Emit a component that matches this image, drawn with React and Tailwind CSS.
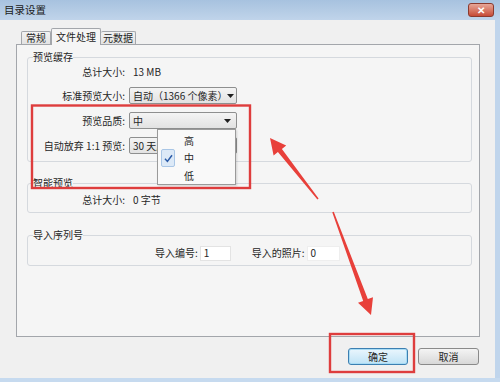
import React from "react";

function Caret() {
  return (
    <svg width="7" height="4" viewBox="0 0 7 4" className="shrink-0">
      <polygon points="0,0 7,0 3.5,4" fill="#1f1f1f" />
    </svg>
  );
}

function Select({ value }) {
  return (
    <div className="ml-[4px] w-[108px] h-[17px] flex items-center justify-between pl-[3px] pr-[5px] border border-[#8e8f8f] rounded-[2px] bg-gradient-to-b from-[#f4f4f4] to-[#e2e2e2] overflow-hidden whitespace-nowrap">
      <span>{value}</span>
      <Caret />
    </div>
  );
}

function Label({ children }) {
  return <span className="w-[97px] shrink-0 text-right whitespace-nowrap">{children}</span>;
}

function Group({ title, className, children }) {
  return (
    <fieldset className={"border border-[#d5d9de] rounded-[3px] " + className}>
      <legend className="ml-[5px] leading-[14px]">{title}</legend>
      {children}
    </fieldset>
  );
}

export default function App() {
  return (
    <div className="relative w-[500px] h-[382px] flex flex-col overflow-hidden bg-[#c3d7ed] text-[10px] leading-[14px] text-[#262626] font-['Noto_Sans_CJK_SC',sans-serif]">
      {/* title bar */}
      <div className="h-[20px] shrink-0 flex items-center justify-between pl-[4px] pr-[6px] bg-gradient-to-b from-[#a7c2df] to-[#c0d4ea]">
        <span className="text-[10.5px] text-[#1a1a1a]">目录设置</span>
        <div className="w-[26px] h-[14px] flex items-center justify-center rounded-[3px] border border-[#8b3a2e] bg-gradient-to-b from-[#e6a698] to-[#c64a36] text-white text-[10px] font-bold leading-none">
          ✕
        </div>
      </div>

      <div className="flex flex-1 min-h-0">
        <div className="flex-1 flex flex-col bg-[#f0f0f0] pt-[8px] pl-[16px] pr-[15px]">
          {/* tabs */}
          <div className="h-[16px] flex items-end pl-[5px]">
            <div className="w-[30px] h-[13px] flex items-center justify-center border border-b-0 border-[#a3a6ab] rounded-t-[2px] bg-gradient-to-b from-[#f2f2f2] to-[#e3e3e3]">
              常规
            </div>
            <div className="relative z-10 w-[50px] h-[17px] -mb-px flex items-center justify-center border border-b-0 border-[#a3a6ab] rounded-t-[2px] bg-[#f5f5f5]">
              文件处理
            </div>
            <div className="w-[35px] h-[13px] flex items-center justify-center border border-b-0 border-l-0 border-[#a3a6ab] rounded-t-[2px] bg-gradient-to-b from-[#f2f2f2] to-[#e3e3e3]">
              元数据
            </div>
          </div>

          {/* tab panel */}
          <div className="h-[293px] shrink-0 flex flex-col border border-[#a3a6ab] bg-[#f5f5f5] pt-[5px] pl-[10px] pr-[7px]">
            <Group title="预览缓存" className="pb-[7px]">
              <div className="h-[16px] flex items-center">
                <Label>总计大小:</Label>
                <span className="ml-[8px]">13 MB</span>
              </div>
              <div className="mt-[7px] h-[17px] flex items-center">
                <Label>标准预览大小:</Label>
                <Select value="自动（1366 个像素）" />
              </div>
              <div className="relative z-20 mt-[8px] h-[17px] flex items-center">
                <Label>预览品质:</Label>
                <div className="relative">
                  <Select value="中" />
                  {/* open list */}
                  <div className="absolute top-full left-[32px] w-[79px] h-[56px] pt-[2px] border border-[#9a9a9a] bg-[#f9f9f9] shadow-[1px_1px_2px_rgba(0,0,0,0.15)]">
                    <div className="h-[17.5px] flex items-center pl-[26px]">高</div>
                    <div className="h-[17.5px] flex items-center pl-[3px]">
                      <div className="w-[14px] h-[18px] flex items-center justify-center rounded-[2px] border border-[#a9c6e6] bg-[#dce9f7]">
                        <svg width="9" height="9" viewBox="0 0 9 9">
                          <path d="M1 4.8 L3.4 7.4 L8 1.2" fill="none" stroke="#2a5aa6" strokeWidth="1.5" />
                        </svg>
                      </div>
                      <span className="ml-[9px]">中</span>
                    </div>
                    <div className="h-[17.5px] flex items-center pl-[26px]">低</div>
                  </div>
                </div>
              </div>
              <div className="mt-[8px] h-[17px] flex items-center">
                <Label>自动放弃 1:1 预览:</Label>
                <Select value="30 天后" />
              </div>
            </Group>

            <Group title="智能预览" className="mt-[14px] pb-[4px]">
              <div className="mt-[2px] h-[16px] flex items-center">
                <Label>总计大小:</Label>
                <span className="ml-[8px]">0 字节</span>
              </div>
            </Group>

            <Group title="导入序列号" className="mt-[15px] pb-[4px]">
              <div className="mt-[3px] h-[16px] flex items-center">
                <span className="w-[127px] shrink-0" />
                <span>导入编号:</span>
                <div className="ml-[2px] w-[31px] h-[15px] flex items-center pl-[3px] bg-white border border-[#e3e3e3]">1</div>
                <span className="ml-[21px]">导入的照片:</span>
                <div className="ml-[2px] w-[33px] h-[15px] flex items-center pl-[3px] bg-white border border-[#eeeeee]">0</div>
              </div>
            </Group>
          </div>

          {/* buttons */}
          <div className="mt-[11px] flex justify-end gap-[10px] pr-[1px]">
            <button className="w-[60px] h-[17px] flex items-center justify-center rounded-[3px] border border-[#3c7fb1] bg-gradient-to-b from-[#eaf6fd] to-[#bfe3f6] shadow-[inset_0_0_0_1px_#a8dcf5]">
              确定
            </button>
            <button className="w-[61px] h-[17px] flex items-center justify-center rounded-[3px] border border-[#8a8a8a] bg-gradient-to-b from-[#f4f4f4] to-[#d8d8d8]">
              取消
            </button>
          </div>
        </div>
        <div className="w-[5px] shrink-0 bg-[#c0d5ec]" />
      </div>
      <div className="h-[4px] shrink-0 bg-[#c6daef]" />

      {/* red annotations */}
      <svg className="absolute inset-0 pointer-events-none z-30" width="500" height="382" viewBox="0 0 500 382">
        <rect x="32" y="105.5" width="218" height="82.5" fill="none" stroke="#de3d3d" strokeWidth="2.4" />
        <rect x="330" y="334" width="84" height="38" fill="none" stroke="#de3d3d" strokeWidth="2.4" />
        <polygon
          points="270,138 286.2,145.6 281.9,149.1 318.6,198.5 317.4,199.5 277.9,152.1 273.6,155.6"
          fill="#e8403a"
        />
        <polygon
          points="371,315 373,297.2 367.8,299.1 333.75,211.7 332.25,212.3 363.2,300.9 358,302.8"
          fill="#e8403a"
        />
      </svg>
    </div>
  );
}
